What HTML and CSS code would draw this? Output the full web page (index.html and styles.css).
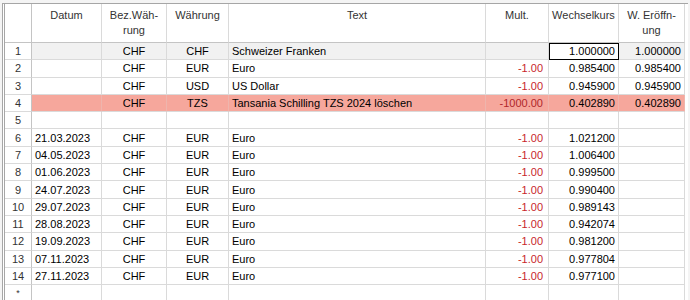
FILE: index.html
```html
<!DOCTYPE html>
<html>
<head>
  <meta charset="utf-8">
  <title>Wechselkurse</title>
  <link rel="stylesheet" href="styles.css">
</head>
<body>
  <div class="frame">
    <div class="row head">
      <div class="cell rh"></div>
      <div class="cell">Datum</div>
      <div class="cell">Bez.Wäh-<br>rung</div>
      <div class="cell">Währung</div>
      <div class="cell">Text</div>
      <div class="cell">Mult.</div>
      <div class="cell">Wechselkurs</div>
      <div class="cell">W. Eröffn-<br>ung</div>
    </div>

    <div class="row current">
      <div class="cell rh">1</div>
      <div class="cell"></div>
      <div class="cell c">CHF</div>
      <div class="cell c">CHF</div>
      <div class="cell">Schweizer Franken</div>
      <div class="cell r neg"></div>
      <div class="cell r focus">1.000000</div>
      <div class="cell r">1.000000</div>
    </div>
    <div class="row">
      <div class="cell rh">2</div>
      <div class="cell"></div>
      <div class="cell c">CHF</div>
      <div class="cell c">EUR</div>
      <div class="cell">Euro</div>
      <div class="cell r neg">-1.00</div>
      <div class="cell r">0.985400</div>
      <div class="cell r">0.985400</div>
    </div>
    <div class="row">
      <div class="cell rh">3</div>
      <div class="cell"></div>
      <div class="cell c">CHF</div>
      <div class="cell c">USD</div>
      <div class="cell">US Dollar</div>
      <div class="cell r neg">-1.00</div>
      <div class="cell r">0.945900</div>
      <div class="cell r">0.945900</div>
    </div>
    <div class="row marked">
      <div class="cell rh">4</div>
      <div class="cell"></div>
      <div class="cell c">CHF</div>
      <div class="cell c">TZS</div>
      <div class="cell">Tansania Schilling TZS 2024 löschen</div>
      <div class="cell r neg">-1000.00</div>
      <div class="cell r">0.402890</div>
      <div class="cell r">0.402890</div>
    </div>
    <div class="row">
      <div class="cell rh">5</div>
      <div class="cell"></div>
      <div class="cell"></div>
      <div class="cell"></div>
      <div class="cell"></div>
      <div class="cell"></div>
      <div class="cell"></div>
      <div class="cell"></div>
    </div>
    <div class="row">
      <div class="cell rh">6</div>
      <div class="cell">21.03.2023</div>
      <div class="cell c">CHF</div>
      <div class="cell c">EUR</div>
      <div class="cell">Euro</div>
      <div class="cell r neg">-1.00</div>
      <div class="cell r">1.021200</div>
      <div class="cell"></div>
    </div>
    <div class="row">
      <div class="cell rh">7</div>
      <div class="cell">04.05.2023</div>
      <div class="cell c">CHF</div>
      <div class="cell c">EUR</div>
      <div class="cell">Euro</div>
      <div class="cell r neg">-1.00</div>
      <div class="cell r">1.006400</div>
      <div class="cell"></div>
    </div>
    <div class="row">
      <div class="cell rh">8</div>
      <div class="cell">01.06.2023</div>
      <div class="cell c">CHF</div>
      <div class="cell c">EUR</div>
      <div class="cell">Euro</div>
      <div class="cell r neg">-1.00</div>
      <div class="cell r">0.999500</div>
      <div class="cell"></div>
    </div>
    <div class="row">
      <div class="cell rh">9</div>
      <div class="cell">24.07.2023</div>
      <div class="cell c">CHF</div>
      <div class="cell c">EUR</div>
      <div class="cell">Euro</div>
      <div class="cell r neg">-1.00</div>
      <div class="cell r">0.990400</div>
      <div class="cell"></div>
    </div>
    <div class="row">
      <div class="cell rh">10</div>
      <div class="cell">29.07.2023</div>
      <div class="cell c">CHF</div>
      <div class="cell c">EUR</div>
      <div class="cell">Euro</div>
      <div class="cell r neg">-1.00</div>
      <div class="cell r">0.989143</div>
      <div class="cell"></div>
    </div>
    <div class="row">
      <div class="cell rh">11</div>
      <div class="cell">28.08.2023</div>
      <div class="cell c">CHF</div>
      <div class="cell c">EUR</div>
      <div class="cell">Euro</div>
      <div class="cell r neg">-1.00</div>
      <div class="cell r">0.942074</div>
      <div class="cell"></div>
    </div>
    <div class="row">
      <div class="cell rh">12</div>
      <div class="cell">19.09.2023</div>
      <div class="cell c">CHF</div>
      <div class="cell c">EUR</div>
      <div class="cell">Euro</div>
      <div class="cell r neg">-1.00</div>
      <div class="cell r">0.981200</div>
      <div class="cell"></div>
    </div>
    <div class="row">
      <div class="cell rh">13</div>
      <div class="cell">07.11.2023</div>
      <div class="cell c">CHF</div>
      <div class="cell c">EUR</div>
      <div class="cell">Euro</div>
      <div class="cell r neg">-1.00</div>
      <div class="cell r">0.977804</div>
      <div class="cell"></div>
    </div>
    <div class="row">
      <div class="cell rh">14</div>
      <div class="cell">27.11.2023</div>
      <div class="cell c">CHF</div>
      <div class="cell c">EUR</div>
      <div class="cell">Euro</div>
      <div class="cell r neg">-1.00</div>
      <div class="cell r">0.977100</div>
      <div class="cell"></div>
    </div>
    <div class="row">
      <div class="cell rh star">*</div>
      <div class="cell"></div>
      <div class="cell"></div>
      <div class="cell"></div>
      <div class="cell"></div>
      <div class="cell"></div>
      <div class="cell"></div>
      <div class="cell"></div>
    </div>
  </div>
</body>
</html>
```

FILE: styles.css
```css
html {
  font-family: "Liberation Sans", Arial, sans-serif;
}
body {
  margin: 0;
  background: #f4f4f4;
  font-size: 11px;
  color: #000;
  overflow: hidden;
}

.frame {
  margin: 3px 0 0 2px;
  width: 683px;
  border-top: 1px solid #a6a6a6;
  border-left: 3px double #a6a6a6;
  background: #fff;
}

.row {
  display: grid;
  grid-template-columns: 27px 70px 65px 62px 257px 63px 70px 66px;
  height: 17.3px;
}

.cell {
  box-sizing: border-box;
  display: flex;
  align-items: center;
  padding: 0 3px;
  border-right: 1px solid #dadada;
  border-bottom: 1px solid #dadada;
  white-space: nowrap;
  overflow: hidden;
}

.c { justify-content: center; }
.r { justify-content: flex-end; }
.neg { color: #c8262b; padding-right: 5px; }

.rh {
  justify-content: center;
  color: #333;
  border-right-color: #c4c4c4;
  background: #fff;
}
.star { font-size: 9px; }

.head {
  height: 39px;
}
.head .cell {
  align-items: flex-start;
  justify-content: center;
  text-align: center;
  padding-top: 4px;
  line-height: 15px;
  color: #333;
  border-bottom-color: #c4c4c4;
  white-space: normal;
}

.current .cell { background: #f1f1f1; }
.current .rh { background: #fff; }
.current .focus {
  background: #fff;
  outline: 1px solid #000;
  outline-offset: -1px;
}

.marked .cell {
  background: #f6a79c;
  border-right-color: #eeb5ad;
}
.marked .rh { background: #fff; border-right-color: #c4c4c4; }
.marked .neg { color: #b0262a; }
```
